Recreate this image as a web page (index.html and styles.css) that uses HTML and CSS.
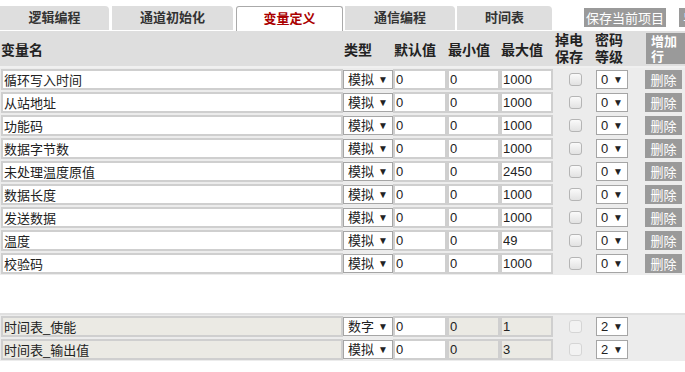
FILE: index.html
```html
<!DOCTYPE html>
<html lang="zh">
  <head>
    <meta charset="UTF-8" />
    <meta name="viewport" content="width=device-width, initial-scale=1.0" />
    <title>变量定义</title>
    <link rel="stylesheet" href="styles.css">
  </head>
  <body>
    <div class="topbar">
      <div class="tabs">
        <div class="tab t1">逻辑编程</div>
        <div class="tab t2">通道初始化</div>
        <div class="tab t3 active">变量定义</div>
        <div class="tab t4">通信编程</div>
        <div class="tab t5">时间表</div>
      </div>
      <button class="btn save">保存当前项目</button>
      <button class="btn more">导出</button>
    </div>

    <div class="row head">
      <div class="cell">变量名</div>
      <div class="cell">类型</div>
      <div class="cell">默认值</div>
      <div class="cell">最小值</div>
      <div class="cell">最大值</div>
      <div class="cell two"><span>掉电</span><span>保存</span></div>
      <div class="cell two"><span>密码</span><span>等级</span></div>
      <div class="cell"><button class="btn add">增加<br />行</button></div>
    </div>

    <div class="rows" id="rows"></div>
    <div class="spacer"></div>
    <div class="rows fixed" id="fixed"></div>

    <script>
      // user variables
      const vars = [
        ['循环写入时间', '1000'],
        ['从站地址', '1000'],
        ['功能码', '1000'],
        ['数据字节数', '1000'],
        ['未处理温度原值', '2450'],
        ['数据长度', '1000'],
        ['发送数据', '1000'],
        ['温度', '49'],
        ['校验码', '1000'],
      ]

      // system variables, not deletable
      const sysVars = [
        ['时间表_使能', '数字', '1'],
        ['时间表_输出值', '模拟', '3'],
      ]

      const rowsEl = document.getElementById('rows')
      for (const v of vars) {
        rowsEl.insertAdjacentHTML('beforeend', `
          <div class="row">
            <div class="cell"><input class="txt name" value="${v[0]}" /></div>
            <div class="cell"><span class="sel type"><select><option>模拟</option><option>数字</option></select></span></div>
            <div class="cell"><input class="txt" value="0" /></div>
            <div class="cell"><input class="txt" value="0" /></div>
            <div class="cell"><input class="txt" value="${v[1]}" /></div>
            <div class="cell center"><input type="checkbox" class="chk" /></div>
            <div class="cell"><span class="sel lvl"><select><option>0</option><option>1</option><option>2</option></select></span></div>
            <div class="cell"><button class="btn del">删除</button></div>
          </div>`)
      }

      const fixedEl = document.getElementById('fixed')
      for (const v of sysVars) {
        fixedEl.insertAdjacentHTML('beforeend', `
          <div class="row">
            <div class="cell"><input class="txt name ro" value="${v[0]}" readonly /></div>
            <div class="cell"><span class="sel type"><select><option>${v[1]}</option></select></span></div>
            <div class="cell"><input class="txt" value="0" /></div>
            <div class="cell"><input class="txt ro" value="0" readonly /></div>
            <div class="cell"><input class="txt ro" value="${v[2]}" readonly /></div>
            <div class="cell center"><input type="checkbox" class="chk" disabled /></div>
            <div class="cell"><span class="sel lvl"><select><option>2</option></select></span></div>
            <div class="cell"></div>
          </div>`)
      }
    </script>
  </body>
</html>
```

FILE: styles.css
```css
:root {
  --tab-bg: #dedede;
  --row-bg: #ececec;
  --btn-bg: #9a9a9a;
  --ro-bg: #ebeae4;
}

body {
  margin: 0;
  font-family: 'Liberation Sans', 'Noto Sans CJK SC', sans-serif;
  font-size: 13px;
  color: #222;
  overflow: hidden;
}

/* tabs */
.topbar {
  display: flex;
  align-items: flex-end;
  height: 31px;
  overflow: hidden;
}

.tabs {
  display: flex;
  gap: 2px;
  flex: none;
}

.tab {
  height: 24px;
  line-height: 24px;
  background: var(--tab-bg);
  text-align: center;
  font-size: 13px;
  font-weight: bold;
  color: #333;
  border-top-right-radius: 4px;
}

.t1 { width: 109px; }
.t2 { width: 121px; margin-left: 1px; }
.t3 { width: 107px; margin-left: 1px; }
.t4 { width: 110px; }
.t5 { width: 95px; }

.tab.active {
  background: #fff;
  color: #a00;
  border: 1px solid #aaa;
  border-bottom: none;
  height: 25px;
  box-sizing: border-box;
  line-height: 23px;
  border-radius: 3px 3px 0 0;
}

.btn {
  font-family: inherit;
  font-size: 13px;
  border: none;
  background: var(--btn-bg);
  color: #fff;
  padding: 0;
  cursor: pointer;
  flex: none;
}

.save {
  width: 82px;
  height: 19px;
  margin: 0 0 4px 32px;
  white-space: nowrap;
}

.more {
  width: 40px;
  height: 19px;
  margin: 0 0 4px 13px;
  text-align: left;
  padding-left: 4px;
}

/* grid rows */
.row {
  display: grid;
  grid-template-columns: 343px 50px 54px 53px 53px 40px 51px 41px;
  align-items: center;
  height: 23px;
  background: var(--row-bg);
}

.head {
  height: 35px;
  background: var(--tab-bg);
  font-size: 14px;
  font-weight: bold;
  border-bottom: 2px solid #f0f0f0;
}

.head .cell {
  padding-left: 1px;
}

.head .two {
  flex-direction: column;
  align-items: flex-start;
  line-height: 17px;
  padding-left: 2px;
}

.add {
  width: 40px;
  height: 31px;
  font-weight: bold;
  line-height: 15px;
  text-align: left;
  padding-left: 5px;
  margin-left: 1px;
}

.cell {
  display: flex;
  align-items: center;
  min-width: 0;
}

.center {
  justify-content: center;
}

.txt {
  box-sizing: border-box;
  width: 100%;
  height: 21px;
  margin: 0;
  padding: 0 1px;
  border: 2px solid #cfcfcf;
  background: #fff;
  font-family: inherit;
  font-size: 13px;
  color: #222;
  outline: none;
}

.txt.name {
  margin-left: 1px;
  width: 342px;
}

.txt.ro {
  background: var(--ro-bg);
}

.sel {
  position: relative;
  display: inline-block;
}

.sel select {
  appearance: none;
  box-sizing: border-box;
  height: 19px;
  margin: 0;
  border: 1px solid #a5a5a5;
  background: #fff;
  font-family: inherit;
  font-size: 13px;
  color: #222;
  padding: 0 0 0 4px;
  outline: none;
}

.sel::after {
  content: '▼';
  position: absolute;
  right: 5px;
  top: 3px;
  font-size: 10px;
  line-height: 13px;
  color: #222;
  pointer-events: none;
}

.type select { width: 50px; }

.lvl { margin-left: 3px; }
.lvl select { width: 32px; }

.chk {
  appearance: none;
  width: 13px;
  height: 13px;
  margin: 0 0 0 4px;
  border: 1px solid #b5b5b5;
  border-radius: 3px;
  background: linear-gradient(#fafafa, #e2e2e2);
}

.chk:disabled {
  border-color: #d5d5d5;
  background: #f2f2f2;
}

.del {
  width: 37px;
  height: 19px;
  margin-left: 1px;
}

.spacer {
  height: 38px;
  border-bottom: 2px solid #e0e0e0;
}
```
